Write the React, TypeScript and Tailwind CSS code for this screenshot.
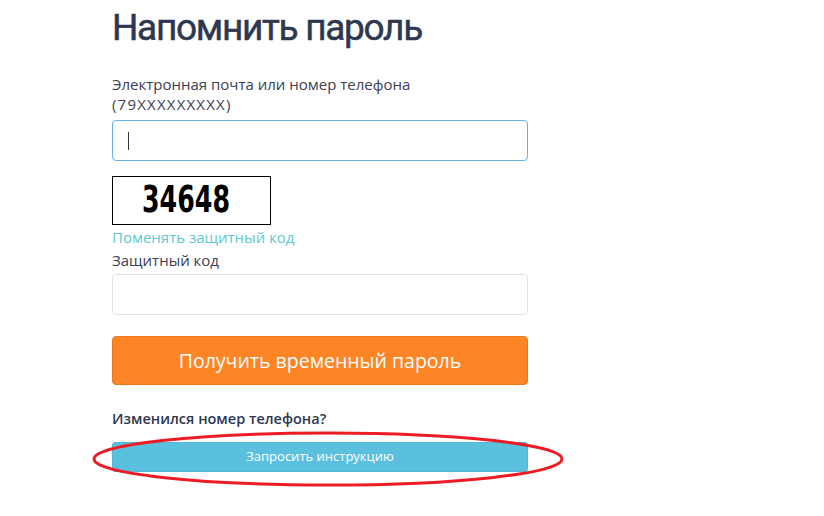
import React from 'react';

const font = { fontFamily: '"Open Sans", "Liberation Sans", sans-serif' };

const App: React.FC = () => {
  return (
    <div className="relative min-h-screen bg-white" style={font}>
      <div className="ml-[112px] w-[416px] pt-[4px]">
        <h1 className="text-[37px] leading-[48px] font-normal tracking-[-1.3px] text-[#2d3750] font-[Roboto,'Open_Sans',sans-serif] [-webkit-text-stroke:0.5px_#2d3750]">
          Напомнить пароль
        </h1>

        <label className="block mt-[22px] text-[15px] leading-[20px] text-[#3b4052]">
          Электронная почта или номер телефона
          <br />
          <span className="tracking-[1.2px]">(79XXXXXXXXX)</span>
        </label>
        <div className="mt-[6px] h-[41px] rounded-[4px] border border-[#66afe9] flex items-center px-[15px]">
          <span className="block w-px h-[18px] bg-[#3b3045]"></span>
        </div>

        <div className="mt-[15px] w-[159px] h-[49px] border border-black bg-white">
          <svg width="157" height="47" viewBox="0 0 157 47">
            <text
              x="29"
              y="35"
              fontFamily="DejaVu Sans Condensed, DejaVu Sans, sans-serif"
              fontWeight="bold"
              fontSize="38"
              textLength="88"
              lengthAdjust="spacingAndGlyphs"
              fill="#000"
            >
              34648
            </text>
          </svg>
        </div>

        <a className="block mt-[2px] text-[15px] leading-[20px] text-[#5dc9d3]">Поменять защитный код</a>
        <label className="block mt-[3px] text-[15px] leading-[20px] text-[#3b4052]">Защитный код</label>
        <div className="mt-[4px] h-[41px] rounded-[4px] border border-[#dde2ec]"></div>

        <button className="mt-[21px] w-full h-[49px] rounded-[4px] bg-[#fd8526] border border-[#ea7a1f] text-white text-[19.5px]">
          Получить временный пароль
        </button>

        <p className="mt-[24px] text-[14.5px] leading-[20px] font-semibold text-[#2d3750]">Изменился номер телефона?</p>
        <button className="mt-[13px] w-full h-[30px] rounded-[3px] bg-[#5bc0de] border border-[#52b6d4] text-white text-[13px]">
          Запросить инструкцию
        </button>
      </div>

      <svg className="absolute left-0 top-0 pointer-events-none" width="824" height="516">
        <ellipse cx="328" cy="459" rx="234" ry="26" fill="none" stroke="#ed1c24" strokeWidth="3" />
      </svg>
    </div>
  );
};

export default App;
